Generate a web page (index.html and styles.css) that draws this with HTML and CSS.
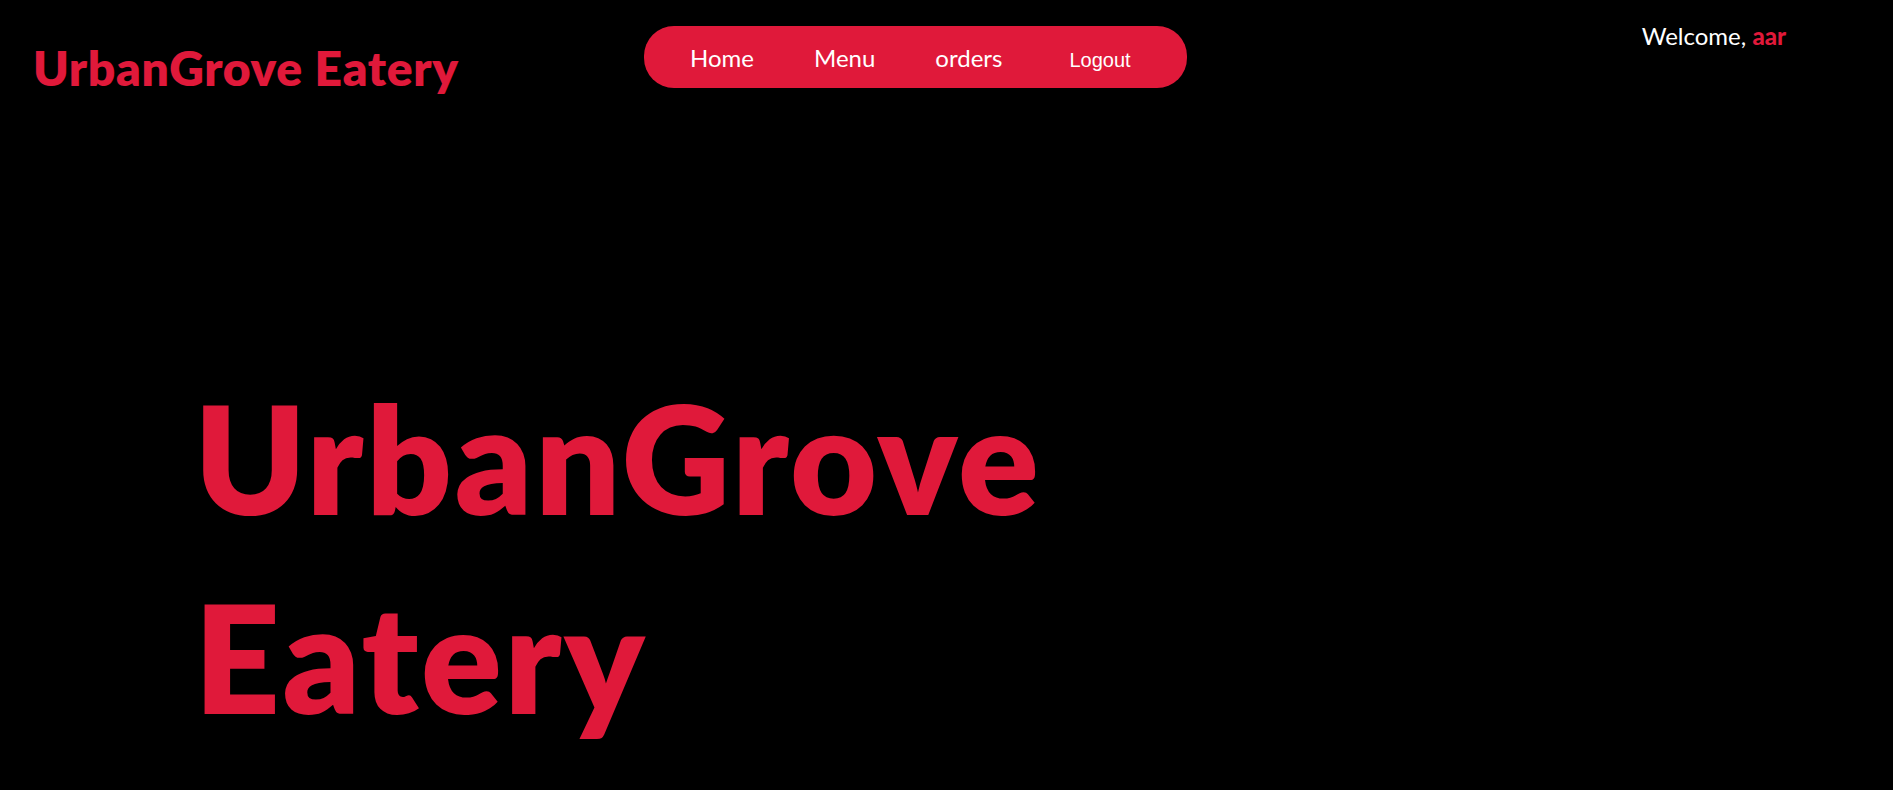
FILE: index.html
```html
<!DOCTYPE html>
<html lang="en">
<head>
<meta charset="utf-8">
<title>UrbanGrove Eatery</title>
<link rel="stylesheet" href="styles.css">
</head>
<body>
<header class="site-header">
  <div class="logo">UrbanGrove Eatery</div>
  <nav class="nav-pill">
    <a class="nav-link" href="#">Home</a>
    <a class="nav-link" href="#">Menu</a>
    <a class="nav-link" href="#">orders</a>
    <button class="logout-btn" type="button">Logout</button>
  </nav>
  <div class="welcome">Welcome, <span class="user-name">aar</span></div>
</header>
<main class="hero">
  <h1 class="hero-title">UrbanGrove<br>Eatery</h1>
</main>
</body>
</html>
```

FILE: styles.css
```css
* { box-sizing: border-box; }

html, body {
  margin: 0;
  padding: 0;
  background: #000;
  height: 100%;
}

body {
  font-family: Lato, "Open Sans", sans-serif;
  color: #fff;
  overflow: hidden;
}

.site-header {
  display: grid;
  grid-template-columns: 611px 543px 1fr;
  align-items: start;
  padding-left: 33px;
  padding-right: 107px;
}

.logo {
  margin-top: 36px;
  font-size: 48px;
  line-height: 64px;
  font-weight: 800;
  letter-spacing: 0.014em;
  color: #e0193a;
  white-space: nowrap;
}

.nav-pill {
  margin-top: 26px;
  height: 62px;
  background: #e0193a;
  border-radius: 30px;
  display: flex;
  align-items: baseline;
  padding: 17px 0 0 46px;
  gap: 60px;
}

.nav-link {
  color: #fff;
  text-decoration: none;
  font-size: 24px;
  line-height: 30px;
}

.logout-btn {
  margin-left: 7px;
  background: transparent;
  border: 0;
  padding: 0;
  color: #fff;
  font-family: "Liberation Sans", Arial, sans-serif;
  font-size: 20px;
  line-height: 30px;
  cursor: pointer;
}

.welcome {
  justify-self: end;
  margin-top: 21px;
  font-size: 24px;
  line-height: 30px;
  white-space: nowrap;
}

.user-name {
  color: #e0193a;
  font-weight: 900;
}

.hero {
  padding: 258px 0 0 194px;
}

.hero-title {
  margin: 0;
  font-size: 150px;
  line-height: 199px;
  font-weight: 800;
  letter-spacing: 0.017em;
  color: #e0193a;
}
```
